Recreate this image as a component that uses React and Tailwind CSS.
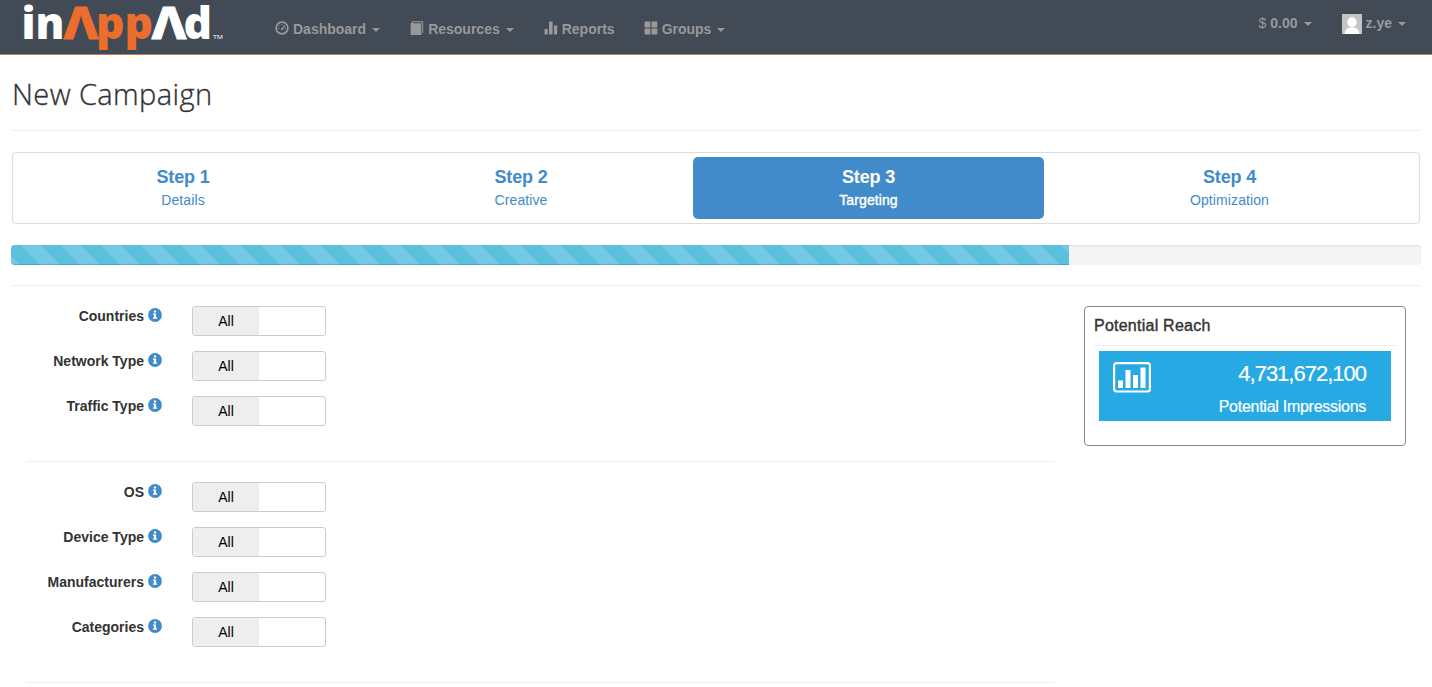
import React from "react";

const Caret = ({ className = "mt-[2px]" }) => (
  <svg width="8" height="4" viewBox="0 0 8 4" className={`shrink-0 ${className}`} fill="currentColor">
    <path d="M0 0h8L4 4z" />
  </svg>
);

const DashboardIcon = () => (
  <svg width="14" height="14" viewBox="0 0 14 14" className="shrink-0" fill="none" stroke="currentColor">
    <circle cx="7" cy="7" r="5.9" strokeWidth="1.7" />
    <path d="M7.2 8 9.8 4.6" strokeWidth="1.3" />
    <circle cx="7" cy="8" r="1.1" fill="currentColor" stroke="none" />
    <path d="M3 7.5h1.2M4.2 4.6l.8.8M7 3.1v1.1M9.900 7.500H11" strokeWidth="1" />
  </svg>
);

const BookIcon = () => (
  <svg width="14" height="14" viewBox="0 0 14 14" className="shrink-0" fill="currentColor">
    <path d="M.6 2.6 2.9.2h10.3v11.2l-1 1.3V1.3H3.4l-.9 1h8.8V14H.6z" />
  </svg>
);

const StatsIcon = () => (
  <svg width="14" height="14" viewBox="0 0 14 14" className="shrink-0" fill="currentColor">
    <rect x="0.5" y="8" width="3.2" height="5.5" rx=".6" />
    <rect x="5" y="0.5" width="3.6" height="13" rx=".6" />
    <rect x="10" y="4.5" width="3.2" height="9" rx=".6" />
  </svg>
);

const GridIcon = () => (
  <svg width="14" height="14" viewBox="0 0 14 14" className="shrink-0" fill="currentColor">
    <rect x="0.5" y="0.5" width="5.9" height="5.9" rx=".5" />
    <rect x="7.5" y="0.5" width="5.9" height="5.9" rx=".5" />
    <rect x="0.5" y="7.5" width="5.9" height="5.9" rx=".5" />
    <rect x="7.5" y="7.5" width="5.9" height="5.9" rx=".5" />
  </svg>
);

const InfoIcon = () => (
  <svg width="14" height="14" viewBox="0 0 14 14" className="shrink-0">
    <circle cx="7" cy="7" r="6.9" fill="#428bca" />
    <path d="M5.9 2.6h2.2v1.8H5.9zM5 5.4h3.1v4h1v1.3H4.900V9.400h1V6.700H5z" fill="#fff" />
  </svg>
);

const Avatar = () => (
  <svg width="20" height="20" viewBox="0 0 20 20" className="shrink-0">
    <rect width="20" height="20" fill="#c5c5c5" />
    <ellipse cx="10" cy="8.3" rx="4.6" ry="5" fill="#fff" />
    <path d="M2.6 20c.3-4.2 2.4-5.8 5.2-6.5h4.400c2.800.7 4.900 2.300 5.200 6.500z" fill="#fff" />
  </svg>
);

const ChartIcon = () => (
  <svg width="38" height="31" viewBox="0 0 38 31" className="shrink-0" fill="#fff">
    <rect x="1.1" y="1.1" width="35.8" height="28.4" rx="2.5" fill="none" stroke="#fff" strokeWidth="2.2" />
    <rect x="5" y="18.5" width="5" height="7.5" />
    <rect x="12.5" y="8" width="5" height="18" />
    <rect x="20" y="13" width="5" height="13" />
    <rect x="27.5" y="5.5" width="5" height="20.5" />
  </svg>
);

const Logo = () => (
  <svg width="210" height="54" viewBox="18 0 210 54" className="block shrink-0 overflow-visible" fontFamily="'Open Sans','Noto Sans',sans-serif" fontWeight="800" fontSize="44">
    <text x="21.5" y="38.5" textLength="43" lengthAdjust="spacingAndGlyphs" fill="#fff">in</text>
    <text x="62.5" y="38.5" fontFamily="Inter,sans-serif" textLength="37" lengthAdjust="spacingAndGlyphs" fill="#ec6e2d" stroke="#ec6e2d" strokeWidth="0.8">Λ</text>
    <text x="96" y="38.5" textLength="57" lengthAdjust="spacingAndGlyphs" fill="#ec6e2d">pp</text>
    <text x="150.5" y="38.5" fontFamily="Inter,sans-serif" textLength="37" lengthAdjust="spacingAndGlyphs" fill="#fff" stroke="#fff" strokeWidth="0.8">Λ</text>
    <text x="183.5" y="38.5" textLength="28.5" lengthAdjust="spacingAndGlyphs" fill="#fff">d</text>
    <text x="213" y="38.5" fontSize="6" fontWeight="400" textLength="10" lengthAdjust="spacingAndGlyphs" fill="#fff">TM</text>
  </svg>
);

const NavItem = ({ icon, label, caret, className }) => (
  <a className={`flex h-5 items-center ${className}`}>
    {icon}
    <span className="relative top-px ml-1 mr-[6px]">{label}</span>
    {caret && <Caret className="mt-1" />}
  </a>
);

const Step = ({ title, text, active, className }) => (
  <li
    className={`flex h-[62px] flex-col items-center rounded-[5px] pt-[10px] ${
      active ? "bg-[#428bca] text-white" : "text-[#428bca]"
    } ${className}`}
  >
    <h4 className="text-[18px] font-bold leading-5 tracking-[-0.15px]">{title}</h4>
    <p className={`mt-[3px] text-sm leading-5 tracking-[0.1px] ${active ? "[-webkit-text-stroke:0.4px_white]" : ""}`}>{text}</p>
  </li>
);

const Field = ({ label }) => (
  <div className="flex h-[30px]">
    <div className="mt-[-1px] flex h-5 w-[136px] items-center justify-end gap-1 text-sm font-bold text-[#333]">
      <span className="relative top-px">{label}</span>
      <InfoIcon />
    </div>
    <div className="ml-[30px] flex h-[30px] w-[134px] overflow-hidden rounded-[3px] border border-[#ccc] bg-white text-sm text-black">
      <span className="flex w-[66px] items-center justify-center bg-[#eee]">All</span>
    </div>
  </div>
);

export default function App() {
  return (
    <div className="h-[687px] w-full overflow-hidden bg-white font-['Liberation_Sans',Arial,sans-serif] text-sm text-[#333]">
      <header className="flex h-[55px] border-b border-[#b98356] bg-[#424a56] pl-[18px] text-sm font-bold text-[#999]">
        <Logo />
        <nav className="flex pt-[18px]">
          <NavItem icon={<DashboardIcon />} label="Dashboard" caret className="ml-[47px]" />
          <NavItem icon={<BookIcon />} label="Resources" caret className="ml-[30px]" />
          <NavItem icon={<StatsIcon />} label="Reports" className="ml-[30px]" />
          <NavItem icon={<GridIcon />} label="Groups" caret className="ml-[23px]" />
        </nav>
        <div className="ml-auto flex pr-[26px] pt-[13px]">
          <a className="flex h-5 items-center gap-[6px]">
            <span><span className="font-normal">$</span> 0.00</span>
            <Caret />
          </a>
          <a className="ml-[30px] flex h-5 items-center">
            <span className="relative top-px"><Avatar /></span>
            <span className="ml-1 mr-[6px]">z.ye</span>
            <Caret />
          </a>
        </div>
      </header>

      <main className="px-[11px]">
        <div className="h-[76px] border-b border-[#eee] pt-[19px]">
          <h1 className="pl-px font-['Open_Sans','Noto_Sans',sans-serif] text-[29px] font-light leading-10 tracking-[0.4px] [-webkit-text-stroke:0.35px_#333]">New Campaign</h1>
        </div>

        <ul className="ml-px mr-px mt-[21px] flex h-[72px] rounded-[4px] border border-[#ddd] p-1">
          <Step title="Step 1" text="Details" className="w-[332px]" />
          <Step title="Step 2" text="Creative" className="w-[344px]" />
          <Step title="Step 3" text="Targeting" active className="w-[351px]" />
          <Step title="Step 4" text="Optimization" className="flex-1" />
        </ul>

        <div className="mt-[21px] h-5 overflow-hidden rounded-[4px] bg-[#f5f5f5] shadow-[inset_0_1px_2px_rgba(0,0,0,0.1)]">
          <div className="h-5 w-[1058px] bg-[#5bc0de] bg-[linear-gradient(45deg,rgba(255,255,255,.15)_25%,transparent_25%,transparent_50%,rgba(255,255,255,.15)_50%,rgba(255,255,255,.15)_75%,transparent_75%,transparent)] bg-[length:40px_40px] bg-[position:10px_0] shadow-[inset_0_-1px_0_rgba(0,0,0,0.15)]" />
        </div>

        <div className="mt-5 flex border-t border-[#eee] pl-[15px] pt-5">
          <div className="w-[1028px]">
            <div className="flex h-[155px] flex-col gap-[15px]">
              <Field label="Countries" />
              <Field label="Network Type" />
              <Field label="Traffic Type" />
            </div>
            <div className="flex h-[221px] flex-col gap-[15px] border-t border-[#eee] pt-5">
              <Field label="OS" />
              <Field label="Device Type" />
              <Field label="Manufacturers" />
              <Field label="Categories" />
            </div>
            <hr className="border-t border-[#eee]" />
          </div>
          <aside className="ml-[30px] h-[140px] w-[322px] rounded-[4px] border border-[#888] px-[9px]">
            <h2 className="h-[39px] border-b border-[#eee] pt-[9px] text-base leading-5 tracking-[0.24px] [-webkit-text-stroke:0.4px_#333]">Potential Reach</h2>
            <div className="ml-[5px] mt-[5px] flex h-[70px] w-[292px] justify-between bg-[#27a9e3] pl-[14px] pr-[25px] text-white">
              <div className="pt-[11px]">
                <ChartIcon />
              </div>
              <div className="text-right">
                <div className="pt-[9px] text-[22px] leading-7 tracking-[-1px] [-webkit-text-stroke:0.2px_white]">4,731,672,100</div>
                <div className="mt-[9px] text-base leading-5 tracking-[-0.27px] [-webkit-text-stroke:0.2px_white]">Potential Impressions</div>
              </div>
            </div>
          </aside>
        </div>
      </main>
    </div>
  );
}
